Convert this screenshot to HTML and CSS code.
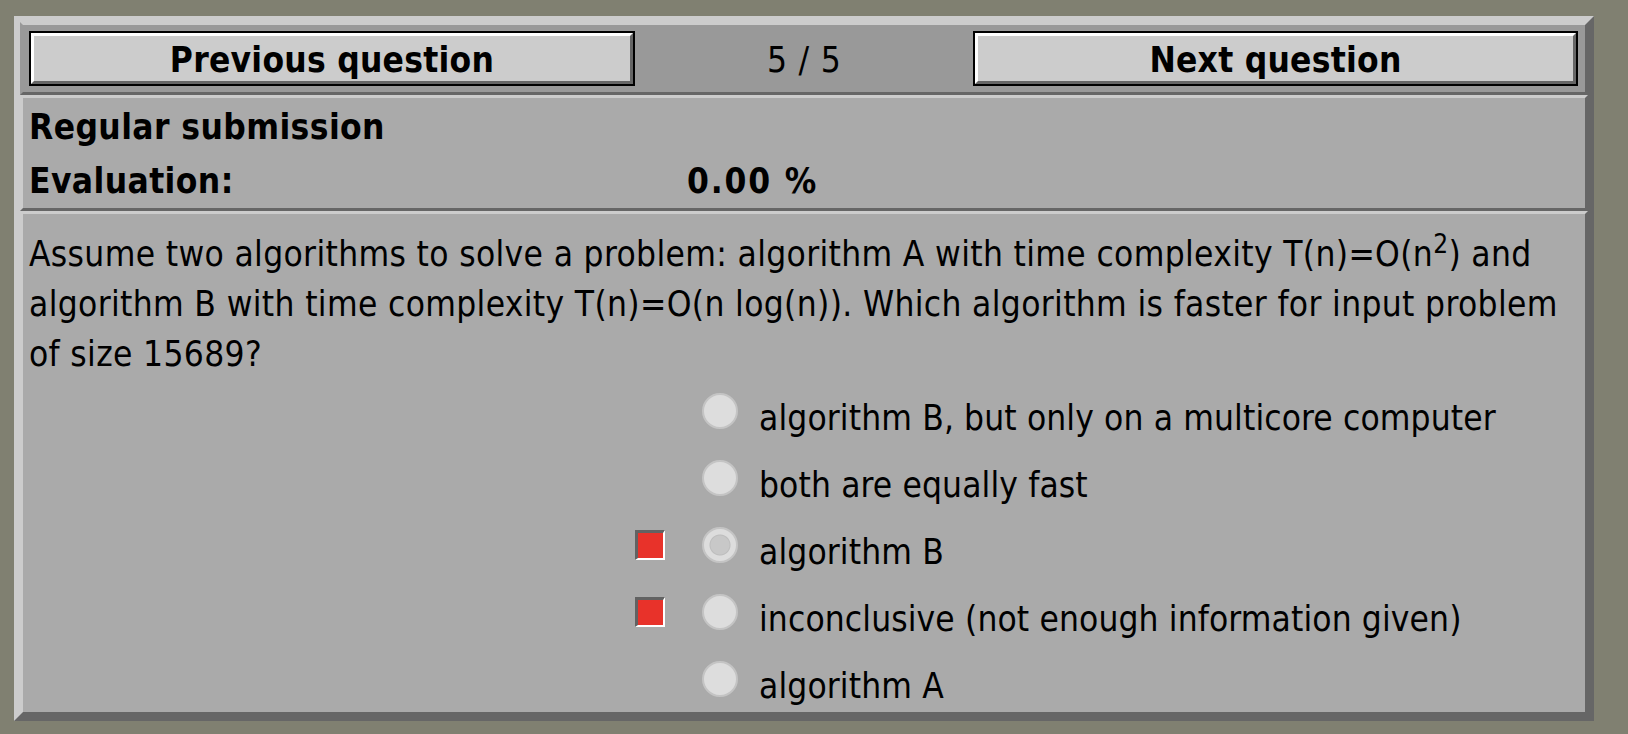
FILE: index.html
```html
<!DOCTYPE html>
<html lang="en">
<head>
<meta charset="utf-8">
<title>Question 5 / 5</title>
<link rel="stylesheet" href="styles.css">
</head>
<body>
<div class="quiz">
  <div class="nav">
    <button class="navbtn" type="button"><span class="navbtn-face">Previous question</span></button>
    <div class="count">5 / 5</div>
    <button class="navbtn" type="button"><span class="navbtn-face">Next question</span></button>
  </div>
  <div class="info">
    <div class="info-cell">Regular submission</div>
    <div class="info-cell"></div>
    <div class="info-cell">Evaluation:</div>
    <div class="info-cell info-value">0.00 %</div>
  </div>
  <div class="qbody">
    <p class="question">Assume two algorithms to solve a problem: algorithm A with time complexity T(n)=O(n<sup class="sup">2</sup>) and algorithm B with time complexity T(n)=O(n log(n)). Which algorithm is faster for input problem of size 15689?</p>
    <ul class="options">
      <li class="opt"><span class="mark mark-off"></span><input class="radio" type="radio" name="a" disabled><span class="otext">algorithm B, but only on a multicore computer</span></li>
      <li class="opt"><span class="mark mark-off"></span><input class="radio" type="radio" name="a" disabled><span class="otext">both are equally fast</span></li>
      <li class="opt"><span class="mark"></span><input class="radio" type="radio" name="a" checked disabled><span class="otext">algorithm B</span></li>
      <li class="opt"><span class="mark"></span><input class="radio" type="radio" name="a" disabled><span class="otext">inconclusive (not enough information given)</span></li>
      <li class="opt"><span class="mark mark-off"></span><input class="radio" type="radio" name="a" disabled><span class="otext">algorithm A</span></li>
    </ul>
  </div>
</div>
</body>
</html>
```

FILE: styles.css
```css
html, body {
  margin: 0;
}
body {
  padding: 16px 0 0 14px;
  background: #808071;
  font-family: "DejaVu Sans Condensed", "DejaVu Sans", sans-serif;
  font-size: 35px;
  color: #000;
}
.quiz {
  width: 1580px;
  box-sizing: border-box;
  border: 6px solid;
  border-color: #cccccc #666666 #666666 #cccccc;
}
.nav {
  display: grid;
  grid-template-columns: 606px 1fr 605px;
  align-items: start;
  padding: 6px 7px 6px 6px;
  background: #999999;
  border: 3px solid;
  border-color: #cccccc #666666 #666666 #999999;
}
.navbtn {
  display: block;
  margin: 0;
  padding: 0;
  border: 2px solid #000;
  background: #cccccc;
  font: inherit;
  font-weight: bold;
  letter-spacing: 0.25px;
  color: #000;
  cursor: pointer;
}
.navbtn-face {
  display: block;
  height: 43px;
  padding-top: 2px;
  line-height: 45px;
  border: 3px solid;
  border-color: #ffffff #666666 #666666 #ffffff;
  text-align: center;
}
.count {
  height: 53px;
  padding-top: 2px;
  line-height: 55px;
  text-align: center;
  letter-spacing: 0.3px;
  word-spacing: 1px;
}
.info {
  display: grid;
  grid-template-columns: 658px 1fr;
  padding: 2px 6px 0;
  background: #aaaaaa;
  border: 3px solid;
  border-color: #cccccc #666666 #666666 #cccccc;
  font-weight: bold;
  letter-spacing: 0.4px;
  line-height: 54px;
}
.info-cell {
  height: 54px;
}
.info-value {
  letter-spacing: 1.8px;
}
.qbody {
  padding: 15px 6px 0;
  background: #aaaaaa;
  border: 3px solid;
  border-color: #cccccc #666666 #666666 #cccccc;
}
.question {
  margin: 0 0 -2px;
  line-height: 50px;
  letter-spacing: 0.34px;
}
.sup {
  font-size: 26px;
  line-height: 0;
  vertical-align: 13px;
}
.options {
  list-style: none;
  margin: 0;
  padding: 0 0 0 606px;
}
.opt {
  display: flex;
  align-items: center;
  height: 67px;
}
.mark {
  flex: none;
  box-sizing: border-box;
  width: 30px;
  height: 30px;
  margin-right: 37px;
  border-style: solid;
  border-width: 3px 2px 2px 3px;
  border-color: #626262 #ffffff #ffffff #626262;
  background: #e8322a;
}
.mark-off {
  visibility: hidden;
}
.radio {
  flex: none;
  -webkit-appearance: none;
  appearance: none;
  box-sizing: border-box;
  width: 36px;
  height: 36px;
  margin: 0 21px 0 0;
  border-radius: 50%;
  border: 2px solid #c4c4c4;
  background: #dddddd;
}
.radio:checked {
  background: radial-gradient(circle, #c8c8c8 0, #c8c8c8 9px, #bdbdbd 10px, #dddddd 11px);
}
.otext {
  line-height: 41px;
  margin-top: 16px;
  letter-spacing: 0.12px;
  white-space: nowrap;
}
```
